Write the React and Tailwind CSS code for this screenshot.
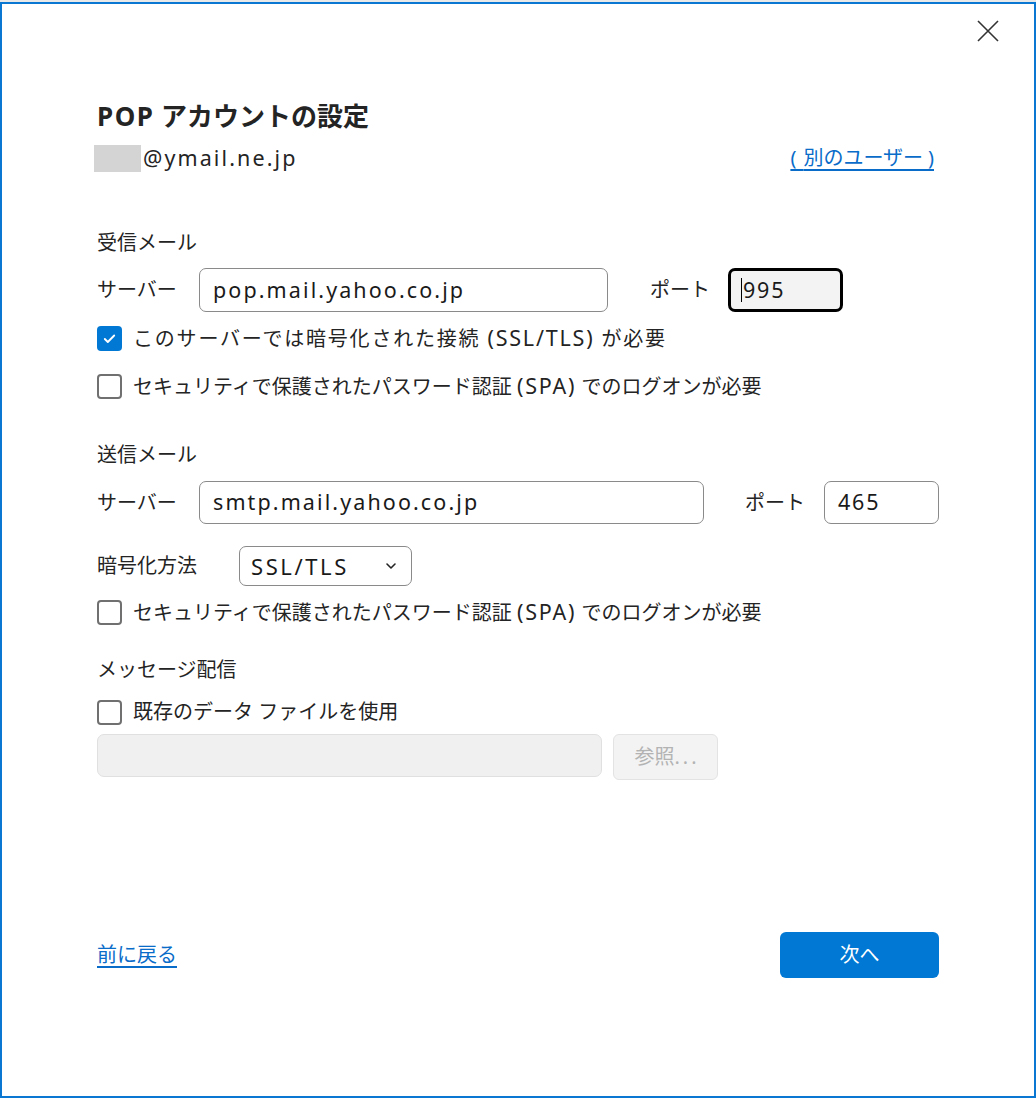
import React, { useState } from "react";

const font = { fontFamily: '"Noto Sans", "Noto Sans CJK JP", sans-serif' };

// latin runs render wider in the original (Segoe UI with GDI spacing)
const L = ({ children }) => <span className="text-[21.5px] tracking-[1.8px]">{children}</span>;

const CheckBox = ({ checked, label, onChange, wide }) => (
  <label className="flex items-center h-[30px] gap-[11px] cursor-pointer">
    {checked ? (
      <span className="w-[25px] h-[25px] rounded-[4px] bg-[#0078d4] flex items-center justify-center">
        <svg width="15" height="15" viewBox="0 0 16 16" fill="none">
          <path d="M3 8.5l3.2 3.2L13 4.8" stroke="white" strokeWidth="2" strokeLinecap="round" strokeLinejoin="round" />
        </svg>
      </span>
    ) : (
      <span className="w-[25px] h-[25px] rounded-[4px] border-2 border-[#707070] bg-white" />
    )}
    <input type="checkbox" className="hidden" checked={checked} onChange={onChange} />
    <span className={wide ? "text-[20px] text-[#242424] tracking-[1.8px]" : "text-[20px] text-[#242424]"}>{label}</span>
  </label>
);

const App = () => {
  const [ssl, setSsl] = useState(true);
  const [spa1, setSpa1] = useState(false);
  const [spa2, setSpa2] = useState(false);
  const [useFile, setUseFile] = useState(false);

  return (
    <div className="w-[1036px] h-[1098px] bg-[#e9e9e9] pt-[2px]" style={font}>
      <div className="h-[1096px] bg-white border-2 border-[#0a78d2] flex flex-col px-[95px] text-[#242424]">
        {/* close */}
        <div className="h-[94px] flex justify-end -mr-[60px] pt-[16px]">
          <button className="w-[22px] h-[22px]">
            <svg width="22" height="22" viewBox="0 0 22 22">
              <path d="M1 1L21 21M21 1L1 21" stroke="#333" strokeWidth="1.6" />
            </svg>
          </button>
        </div>

        <h1 className="h-[36px] leading-[36px] text-[26px] font-bold text-[#242424]">
          <span className="tracking-[1.5px]">POP</span> アカウントの設定
        </h1>

        <div className="mt-[8px] h-[32px] flex items-center justify-between">
          <div className="flex items-center">
            <span className="w-[47px] h-[27px] bg-[#d4d4d4] -ml-[3px] mr-[2px]" />
            <span className="text-[21.5px] tracking-[2.1px]">@ymail.ne.jp</span>
          </div>
          <a href="#" className="mr-[4px] text-[20px] text-[#0a6cc9] underline underline-offset-[4px] decoration-[1.5px]">
            <span className="tracking-[7px]">(</span>別のユーザー<span className="tracking-[3px]">&#8202;</span><span className="pr-[1px]">)</span>
          </a>
        </div>

        <div className="mt-[54px] h-[30px] leading-[30px] text-[20px]">受信メール</div>

        <div className="mt-[10px] flex items-center h-[44px]">
          <span className="w-[102px] text-[20px]">サーバー</span>
          <div className="w-[409px] h-[44px] rounded-[7px] border-[1.5px] border-[#8a8a8a] flex items-center px-[13px] text-[#1a1a1a]">
            <span className="text-[21.5px] tracking-[2.1px]">pop.mail.yahoo.co.jp</span>
          </div>
          <span className="ml-[42px] w-[78px] text-[20px]">ポート</span>
          <div className="w-[115px] h-[44px] rounded-[7px] border-[3px] border-black bg-[#f3f3f3] flex items-center px-[10px] text-[#1a1a1a]">
            <span className="w-[1px] h-[24px] bg-black mr-[1px]" />
            <L>995</L>
          </div>
        </div>

        <div className="mt-[11px]">
          <CheckBox
            wide
            checked={ssl}
            onChange={() => setSsl(!ssl)}
            label={<>このサーバーでは暗号化された接続 <L>(SSL/TLS)</L> が必要</>}
          />
        </div>
        <div className="mt-[18px]">
          <CheckBox
            checked={spa1}
            onChange={() => setSpa1(!spa1)}
            label={<>セキュリティで保護されたパスワード認証 <L>(SPA)</L> でのログオンが必要</>}
          />
        </div>

        <div className="mt-[39px] h-[30px] leading-[30px] text-[20px]">送信メール</div>

        <div className="mt-[11px] flex items-center h-[43px]">
          <span className="w-[102px] text-[20px]">サーバー</span>
          <div className="w-[505px] h-[43px] rounded-[7px] border-[1.5px] border-[#8a8a8a] flex items-center px-[13px] text-[#1a1a1a]">
            <span className="text-[21.5px] tracking-[2.1px]">smtp.mail.yahoo.co.jp</span>
          </div>
          <span className="ml-[41px] w-[79px] text-[20px]">ポート</span>
          <div className="w-[115px] h-[43px] rounded-[7px] border-[1.5px] border-[#8a8a8a] flex items-center px-[13px] text-[#1a1a1a]">
            <L>465</L>
          </div>
        </div>

        <div className="mt-[22px] flex items-center h-[40px]">
          <span className="w-[142px] text-[20px]">暗号化方法</span>
          <div className="w-[173px] h-[40px] rounded-[7px] border-[1.5px] border-[#8a8a8a] flex items-center justify-between pl-[11px] pr-[14px] text-[#1a1a1a]">
            <span className="text-[22px] tracking-[2.6px]">SSL/TLS</span>
            <svg width="12" height="8" viewBox="0 0 12 8">
              <path d="M2 2l4 4 4-4" stroke="#242424" strokeWidth="1.6" fill="none" strokeLinecap="round" strokeLinejoin="round" />
            </svg>
          </div>
        </div>

        <div className="mt-[11px]">
          <CheckBox
            checked={spa2}
            onChange={() => setSpa2(!spa2)}
            label={<>セキュリティで保護されたパスワード認証 <L>(SPA)</L> でのログオンが必要</>}
          />
        </div>

        <div className="mt-[28px] h-[30px] leading-[30px] text-[20px]">メッセージ配信</div>
        <div className="mt-[12px]">
          <CheckBox checked={useFile} onChange={() => setUseFile(!useFile)} label="既存のデータ ファイルを使用" />
        </div>

        <div className="mt-[7px] flex items-start gap-[11px]">
          <div className="w-[505px] h-[43px] rounded-[7px] border-[1.5px] border-[#e0e0e0] bg-[#f0f0f0]" />
          <button className="w-[105px] h-[46px] rounded-[6px] border-[1.5px] border-[#e3e3e3] bg-[#f3f3f3] text-[20px] text-[#b3b3b3] flex items-center justify-center">
            参照<span className="tracking-[3px] -mr-[3px]">...</span>
          </button>
        </div>

        <div className="mt-[152px] flex items-center justify-between h-[46px]">
          <a href="#" className="text-[20px] text-[#0a6cc9] underline underline-offset-[4px] decoration-[1.5px]">
            前に戻る
          </a>
          <button className="w-[159px] h-[46px] rounded-[6px] bg-[#0078d4] text-white text-[20px]">次へ</button>
        </div>
      </div>
    </div>
  );
};

export default App;
